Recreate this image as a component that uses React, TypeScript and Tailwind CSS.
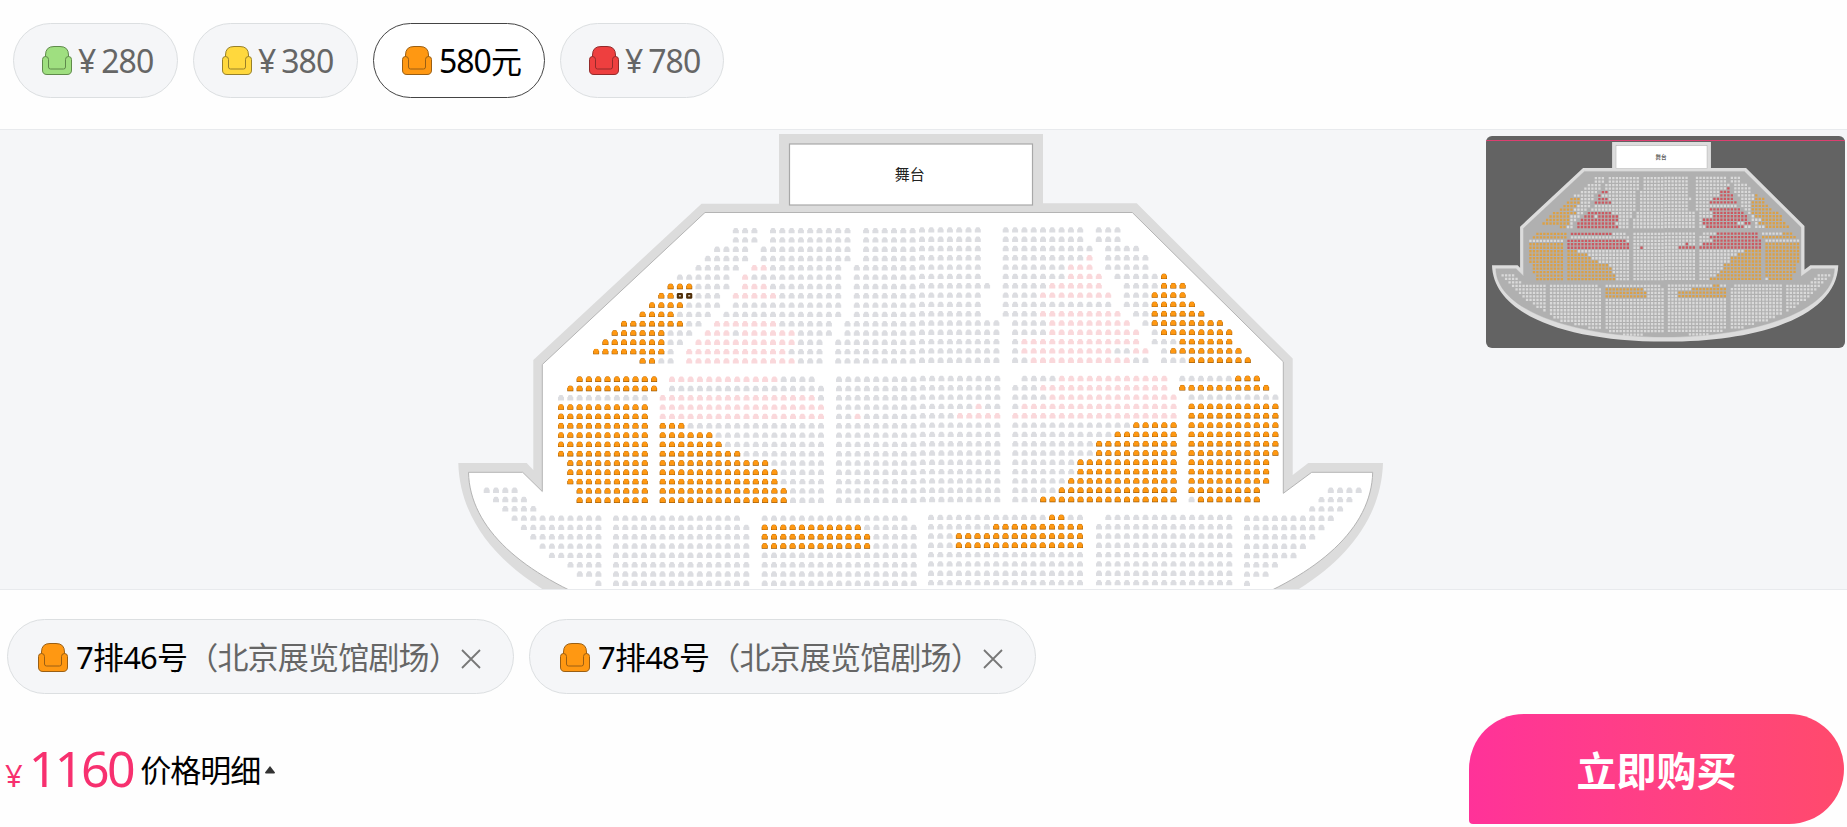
import clsx from "clsx";

type SeatKind = "g" | "r" | "o" | "s";
type Seat = { x: number; y: number; kind: SeatKind };
type Block = { x: number; y: number; rows: string[] };

const PITCH = 9.31;

// Each row is run-length encoded: "." gap, g unavailable, r 780, o 580, s selected.
const BLOCKS: Block[] = [
  {
    x: 596.1,
    y: 230.6,
    rows: [
      "15.3g1.9g1.13g2.9g1.3g",
      "15.3g1.9g1.13g2.9g1.3g",
      "13.4g1.10g1.13g2.10g1.4g",
      "12.5g1.10g1.13g2.9g1r1.5g",
      "11.5g1.2r8g1.14g2.7g3r1.5g",
      "9.6g1.1r10g1.14g2.7g4r1.5g1o",
      "8.3o4g1.3r8g1.15g1.5g6r2.4g3o",
      "7.2o2s3g1.5r7g1.14g2.4g8r1.3g4o",
      "6.4o4g1.12g1.14g2.12g1.3g5o",
      "5.4o4g1.13g1.14g2.4g9r1.2g6o",
      "3.7o2g1.7r6g1.17g1.4g9r1.1g8o",
      "2.6o3g1.3r1g6r4g1.17g1.4g10r1.1g8o",
      "1.7o2g1.11r3g1.18g1.1g13r1.3g6o",
      "8o1g1.11r4g1.18g1.1g10r2g2r1.1g8o",
      "5.2o2g1.12r3g1.18g1.2g11r2g1.3g7o",
    ],
  },
  {
    x: 561,
    y: 379.2,
    rows: ["2.9o", "1.10o", "10g", "10o", "10o", "10o", "10o", "10o", "10o", "1.9o", "1.9o", "1.9o", "2.8o", "2.8o"],
  },
  {
    x: 662.7,
    y: 379.2,
    rows: ["1.12r4g", "1.17g", "17r1g", "18r", "18r", "3o15g", "6o12g", "7o11g", "9o9g", "12o6g", "13o5g", "13o5g", "14o4g", "14o4g"],
  },
  {
    x: 839,
    y: 379.2,
    rows: ["18g", "18g", "18g", "15g1r2g", "2g1r10g5r", "18g", "18g", "18g", "18g", "18g", "18g", "18g", "18g", "18g"],
  },
  {
    x: 1015.3,
    y: 379.2,
    rows: ["1.4g12r", "3g14r", "4g14r", "1g17r", "18r", "13g5o", "11g7o", "9g9o", "9g9o", "7g11o", "7g11o", "6g12o", "5g13o", "3g15o"],
  },
  {
    x: 1182.3,
    y: 379.2,
    rows: ["6g3o", "10o", "1.10g", "1.10o", "1.10o", "1.10o", "1.10o", "1.10o", "1.10o", "1.9o", "1.9o", "1.9o", "1.8o", "1.1g7o"],
  },
  {
    x: 486.7,
    y: 490.2,
    rows: ["4g", "1.4g", "2.4g", "3.10g", "4.9g", "5.8g", "6.7g", "7.6g", "9.4g", "10.3g", "12.1g"],
  },
  {
    x: 616,
    y: 518.1,
    rows: ["14g", "15g", "15g", "15g", "15g", "15g", "15g", "15g", "15g", "1.14g", "3.12g", "7.8g", "11.4g"],
  },
  {
    x: 764.7,
    y: 518.1,
    rows: ["16g", "11o6g", "12o5g", "12o5g", "17g", "17g", "17g", "17g", "17g", "17g", "17g", "17g", "17g", "1.16g", "5.6g"],
  },
  {
    x: 931,
    y: 518.1,
    rows: ["13g2o2g", "7g10o", "3g14o", "3g14o", "17g", "17g", "17g", "17g", "17g", "17g", "17g", "17g", "17g", "16g", "6.6g"],
  },
  {
    x: 1099,
    y: 518.1,
    rows: ["1.14g", "15g", "15g", "15g", "15g", "15g", "15g", "15g", "15g", "13g", "11g", "7g", "4g"],
  },
  {
    x: 1247,
    y: 491,
    rows: ["9.4g", "8.4g", "7.4g", "10g", "9g", "8g", "7g", "6g", "4g", "3g", "1g"],
  },
];

function readSeats(blocks: Block[]): Seat[] {
  const seats: Seat[] = [];
  for (const block of blocks) {
    block.rows.forEach((row, r) => {
      let col = 0;
      for (const [, count, kind] of row.matchAll(/(\d+)([.gros])/g)) {
        for (let i = 0; i < Number(count); i++, col++) {
          if (kind === ".") continue;
          const x = block.x + col * PITCH;
          // the right half of the hall sits slightly higher
          const y = block.y + r * PITCH - (x > 918 ? 0.7 : 0);
          seats.push({ x, y, kind: kind as SeatKind });
        }
      }
    });
  }
  return seats;
}

const SEATS = readSeats(BLOCKS);

const seatShape = ({ x, y }: Seat) =>
  `M${(x - 3).toFixed(1)} ${(y + 2.7).toFixed(1)}v-3.400h.6q0-2 1.400-2h2q1.400 0 1.400 2h.6v3.400z`;
const cushionShape = ({ x, y }: Seat) =>
  `M${(x - 2.5).toFixed(1)} ${(y + 1.6).toFixed(1)}v-2.200q.3-1.900 1.700-1.900h1.600q1.400 0 1.700 1.900v2.200q0 .5-.6.5h-3.800q-.6 0-.6-.5z`;
const dotShape = ({ x, y }: Seat) => `M${(x - 3.1).toFixed(1)} ${(y - 3.1).toFixed(1)}h6.200v6.200h-6.200z`;

const pathOf = (kinds: string, shape: (s: Seat) => string) =>
  SEATS.filter((s) => kinds.includes(s.kind)).map(shape).join("");

const HALL_OUTER =
  "M779 134H1043V203.3H1136.7L1292.7 358.5V475L1308.3 463H1383C1379 590 1196 667 920.7 667S462 590 458.3 463H526.7L533.3 470V360L701.5 203.7H779Z";
const HALL_INNER =
  "M705 212.5H1132.3L1283.3 361.8V493.3L1311.7 472.3H1372.7C1370 585 1160 655 920.7 655S471 585 468.5 472.3H522.7L542.3 491.5V364.5Z";

function HallOutline({ floor, edge }: { floor: string; edge: string }) {
  return (
    <>
      <path d={HALL_OUTER} fill="#dcdcdc" />
      <path d={HALL_INNER} fill={floor} stroke={edge} strokeWidth="1" />
      <rect x="789.5" y="144" width="243" height="61" fill="#fff" stroke="#a8a8a8" strokeWidth="1.2" />
      <text x="909.7" y="180.3" textAnchor="middle" fontSize="15" fill="#222">
        舞台
      </text>
    </>
  );
}

function SeatMap() {
  return (
    <svg viewBox="0 130 1847 459" className="block h-[459px] w-[1847px]">
      <HallOutline floor="#fff" edge="#b4b4b4" />
      <path d={pathOf("g", seatShape)} fill="#dcdde1" />
      <path d={pathOf("r", seatShape)} fill="#fad8db" />
      <path d={pathOf("o", seatShape)} fill="#8f5206" />
      <path d={pathOf("o", cushionShape)} fill="#ff9812" stroke="#ff9812" strokeWidth="0.3" />
      {SEATS.filter((s) => s.kind === "s").map((s) => (
        <g key={s.x}>
          <rect x={s.x - 3.1} y={s.y - 2.7} width="6.2" height="5.8" rx="1.4" fill="#51300a" />
          <rect x={s.x - 1} y={s.y - 0.5} width="2" height="1.1" fill="#fff" />
        </g>
      ))}
    </svg>
  );
}

function MiniMap() {
  return (
    <div className="absolute top-[6px] right-[2px] h-[212px] w-[359px] overflow-hidden rounded-md bg-[#636363]">
      <svg viewBox="442.3 118 958.6 566" className="block h-full w-full">
        <HallOutline floor="#b0b0b0" edge="#b0b0b0" />
        <path d={pathOf("g", dotShape)} fill="#dadada" />
        <path d={pathOf("r", dotShape)} fill="#cc5860" />
        <path d={pathOf("os", dotShape)} fill="#dca045" />
      </svg>
      <div className="absolute inset-x-0 top-[4px] h-px bg-[#dc3f70]" />
    </div>
  );
}

function SeatIcon({ color, edge }: { color: string; edge: string }) {
  return (
    <svg viewBox="0 0 30 29" className="h-[29px] w-[30px] shrink-0" fill={color} stroke={edge} strokeWidth="1">
      <path d="M3.5 14V9Q3.5.5 12 .5h6q8.500 0 8.500 8.500v5z" />
      <path d="M5 12h20v12H5z" stroke="none" />
      <path d="M.5 13.500q0-3 3-3t3 3V21q0 2 2 2h13q2 0 2-2v-7.500q0-3 3-3t3 3V24q0 4.500-4.500 4.500H5Q.5 28.500.5 24z" />
    </svg>
  );
}

const PRICES = [
  { label: "280", color: "#9fdf80", edge: "#5f8a4b", width: "w-[165px]" },
  { label: "380", color: "#ffd83d", edge: "#97802a", width: "w-[165px]" },
  { label: "580", color: "#ff9812", edge: "#9a5f14", width: "w-[172px]", active: true },
  { label: "780", color: "#ee3f3f", edge: "#932a2a", width: "w-[164px]" },
];

function PriceFilter() {
  return (
    <div className="flex h-[129px] gap-[15px] pt-[23px] pl-[13px]">
      {PRICES.map((price) => (
        <button
          key={price.label}
          className={clsx(
            "flex h-[75px] items-center rounded-full border pl-[28px] text-[32px] leading-none tracking-[-1px] whitespace-nowrap",
            price.width,
            price.active ? "border-[#444] bg-white text-black" : "border-[#dcdfe1] bg-[#f5f6f8] text-[#666]",
          )}
        >
          <SeatIcon color={price.color} edge={price.edge} />
          {price.active ? (
            <span className="ml-[7px]">
              {price.label}
              <span className="text-[31px]">元</span>
            </span>
          ) : (
            <>
              <span className="ml-[6px]">¥</span>
              <span className="ml-[6px]">{price.label}</span>
            </>
          )}
        </button>
      ))}
    </div>
  );
}

function SelectedSeat({ seat }: { seat: string }) {
  return (
    <div className="flex h-[75px] w-[507px] items-center rounded-full border border-[#dcdfe1] bg-[#f5f6f8] pt-[2px] pl-[30px] text-[31px] leading-none tracking-[-0.8px] whitespace-nowrap">
      <SeatIcon color="#ff9812" edge="#9a5f14" />
      <span className="ml-[8px] text-black">{seat}</span>
      <span className="text-[#666]">（北京展览馆剧场）</span>
      <svg viewBox="0 0 20 20" className="mt-[3px] ml-[2px] h-5 w-5 shrink-0" stroke="#777" strokeWidth="1.8">
        <path d="M1 1l18 18M19 1L1 19" />
      </svg>
    </div>
  );
}

export default function App() {
  return (
    <div className="flex h-[827px] w-[1847px] flex-col overflow-hidden bg-[#fefefe] font-['Noto_Sans','Noto_Sans_CJK_SC',sans-serif]">
      <PriceFilter />

      <main className="relative h-[461px] border-y border-[#e8eaed] bg-[#f5f6f8]">
        <SeatMap />
        <MiniMap />
      </main>

      <div className="flex gap-[15px] pt-[29px] pl-[7px]">
        <SelectedSeat seat="7排46号" />
        <SelectedSeat seat="7排48号" />
      </div>

      <footer className="mt-[20px] flex h-[110px] items-center justify-between pr-[3px] pl-[5px]">
        <div className="flex items-baseline pb-[2px] leading-none">
          <span className="text-[31px] text-[#f7306f]">¥</span>
          <span className="ml-[6px] text-[50px] tracking-[-2.500px] text-[#f7306f]">1160</span>
          <div className="mb-[7px] ml-[7px] flex items-center self-end">
            <span className="text-[31px] tracking-[-1px] text-black">价格明细</span>
            <svg viewBox="0 0 10 8" className="mb-[2px] ml-[5px] h-2 w-[10px]" fill="#333">
              <path d="M5 0l5 6.500q0 1-1 1H1q-1 0-1-1z" />
            </svg>
          </div>
        </div>
        <button className="flex h-[110px] w-[375px] items-center justify-center rounded-[55px] rounded-bl-[4px] bg-linear-to-r from-[#ff3299] to-[#ff4a6c] pt-[4px] text-[40px] font-bold text-white">
          <span>立即购买</span>
        </button>
      </footer>
    </div>
  );
}
